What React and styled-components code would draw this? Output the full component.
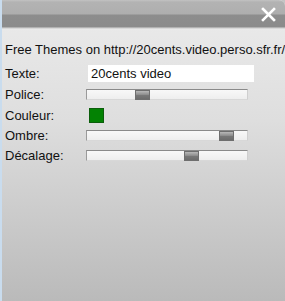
import styled, { createGlobalStyle } from "styled-components"

const Global = createGlobalStyle`
  html, body { margin: 0; padding: 0; }
  body { background: #c4c4c4; font-family: "Liberation Sans", Arial, sans-serif; }
`

const Panel = styled.div`
  width: 285px;
  height: 301px;
  display: flex;
  flex-direction: column;
  overflow: hidden;
  border-top-right-radius: 6px;
  background: linear-gradient(180deg, #ececec 0%, #dedede 40%, #c6c6c6 80%, #bababa 100%);
  border-left: 2px solid #c9dcee;
  box-sizing: border-box;
`

const TitleBar = styled.div`
  height: 29px;
  flex: none;
  display: flex;
  justify-content: flex-end;
  align-items: center;
  padding-right: 9px;
  background: linear-gradient(180deg, #c2c2c2 0px, #b3b3b3 2px, #aeaeae 14px, #8d8d8d 15px, #8b8b8b 27px, #d8d8d8 28px);
  margin-left: -2px;
`

const Body = styled.div`
  padding: 12px 0 0 3px;
  color: #111;
  font-size: 13px;
`

const Heading = styled.div`
  line-height: 15px;
  white-space: nowrap;
  margin-bottom: 5px;
  margin-top: 1px;
`

const Form = styled.div`
  display: grid;
  grid-template-columns: 81px 1fr;
  grid-template-rows: 22px 21px 20px 20px 20px;
  align-items: center;
`

const Label = styled.div`
  font-size: 13px;
  line-height: 15px;
`

const TextBox = styled.div`
  width: 166px;
  height: 17px;
  margin-left: 2px;
  background: #fff;
  font-size: 13px;
  line-height: 17px;
  padding-left: 3px;
  box-sizing: border-box;
`

const Track = styled.div`
  position: relative;
  width: 162px;
  height: 11px;
  box-sizing: border-box;
  border-top: 1px solid #8a8a8a;
  border-left: 1px solid #9a9a9a;
  border-right: 1px solid #cfcfcf;
  border-bottom: 1px solid #d8d8d8;
  background: linear-gradient(180deg, #f8f8f8, #eeeeee);
`

const Thumb = styled.div`
  position: absolute;
  top: 0px;
  width: 15px;
  height: 10px;
  box-sizing: border-box;
  border: 1px solid #6e6e6e;
  background: linear-gradient(180deg, #b8b8b8 0%, #8e8e8e 45%, #777 55%, #6c6c6c 100%);
`

const Swatch = styled.div`
  width: 15px;
  height: 15px;
  margin-left: 3px;
  box-sizing: border-box;
  border: 1px solid #0b5e0b;
  background: #038203;
`

function Slider({ pos }) {
  return (
    <Track>
      <Thumb style={{ left: pos }} />
    </Track>
  )
}

export default function App() {
  return (
    <>
      <Global />
      <Panel>
        <TitleBar>
          <svg width="15" height="15" viewBox="0 0 15 15">
            <path d="M2 2 L13 13 M13 2 L2 13" stroke="#fff" strokeWidth="2.6" strokeLinecap="square" />
          </svg>
        </TitleBar>
        <Body>
          <Heading>Free Themes on http://20cents.video.perso.sfr.fr/</Heading>
          <Form>
            <Label>Texte:</Label>
            <TextBox>20cents video</TextBox>
            <Label>Police:</Label>
            <Slider pos={48} />
            <Label>Couleur:</Label>
            <Swatch />
            <Label>Ombre:</Label>
            <Slider pos={132} />
            <Label>Décalage:</Label>
            <Slider pos={97} />
          </Form>
        </Body>
      </Panel>
    </>
  )
}
